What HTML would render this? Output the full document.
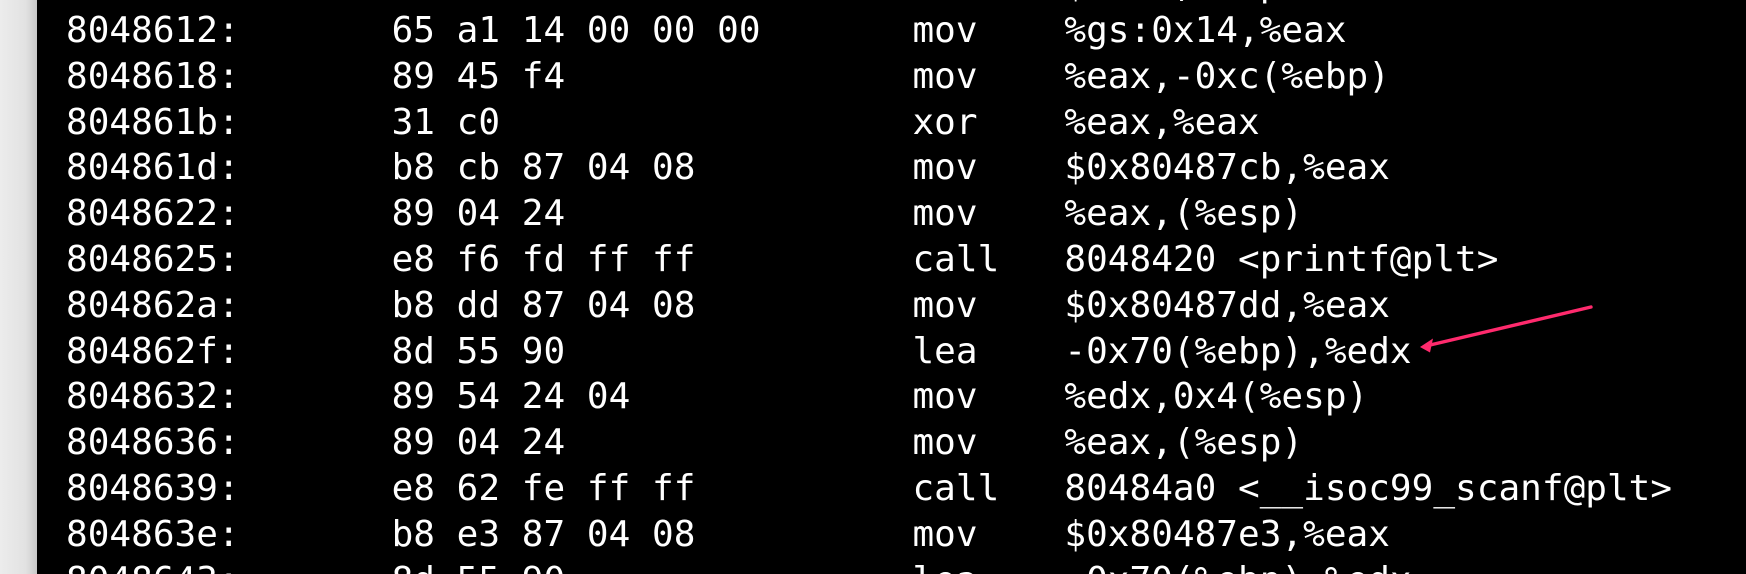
<!DOCTYPE html>
<html><head><meta charset="utf-8"><style>
html{margin:0;padding:0;width:1746px;height:574px;overflow:hidden;background:#000;}
body{margin:0;padding:0;width:1746px;height:574px;overflow:hidden;background:#000;position:relative;}
.strip{position:fixed;left:0;top:0;width:37px;height:574px;background:linear-gradient(to right,#ececec 0%,#e2e2e2 70%,#c8c8c8 100%);}
.clip{position:absolute;left:0;top:0;width:1746px;height:574px;overflow:hidden;}
pre{position:absolute;left:44.3px;top:-37.8px;margin:0;font-family:"DejaVu Sans Mono","Liberation Mono",monospace;font-size:36px;line-height:45.8px;color:#fff;white-space:pre;letter-spacing:0.03px;}
svg{position:absolute;left:0;top:0;}
</style></head><body>
<div class="clip">
<div class="strip"></div>
<pre> 804860f:	83 ec 74             	sub    $0x74,%esp
 8048612:	65 a1 14 00 00 00    	mov    %gs:0x14,%eax
 8048618:	89 45 f4             	mov    %eax,-0xc(%ebp)
 804861b:	31 c0                	xor    %eax,%eax
 804861d:	b8 cb 87 04 08       	mov    $0x80487cb,%eax
 8048622:	89 04 24             	mov    %eax,(%esp)
 8048625:	e8 f6 fd ff ff       	call   8048420 &lt;printf@plt&gt;
 804862a:	b8 dd 87 04 08       	mov    $0x80487dd,%eax
 804862f:	8d 55 90             	lea    -0x70(%ebp),%edx
 8048632:	89 54 24 04          	mov    %edx,0x4(%esp)
 8048636:	89 04 24             	mov    %eax,(%esp)
 8048639:	e8 62 fe ff ff       	call   80484a0 &lt;__isoc99_scanf@plt&gt;
 804863e:	b8 e3 87 04 08       	mov    $0x80487e3,%eax
 8048643:	8d 55 90             	lea    -0x70(%ebp),%edx</pre>
<svg width="1746" height="574" viewBox="0 0 1746 574">
<line x1="1591" y1="307" x2="1428" y2="345.5" stroke="#ff2a6d" stroke-width="3.4" stroke-linecap="round"/>
<polygon points="1420,347 1433,338.5 1430,352.5" fill="#ff2a6d"/>
</svg>
</div>
</body></html>
